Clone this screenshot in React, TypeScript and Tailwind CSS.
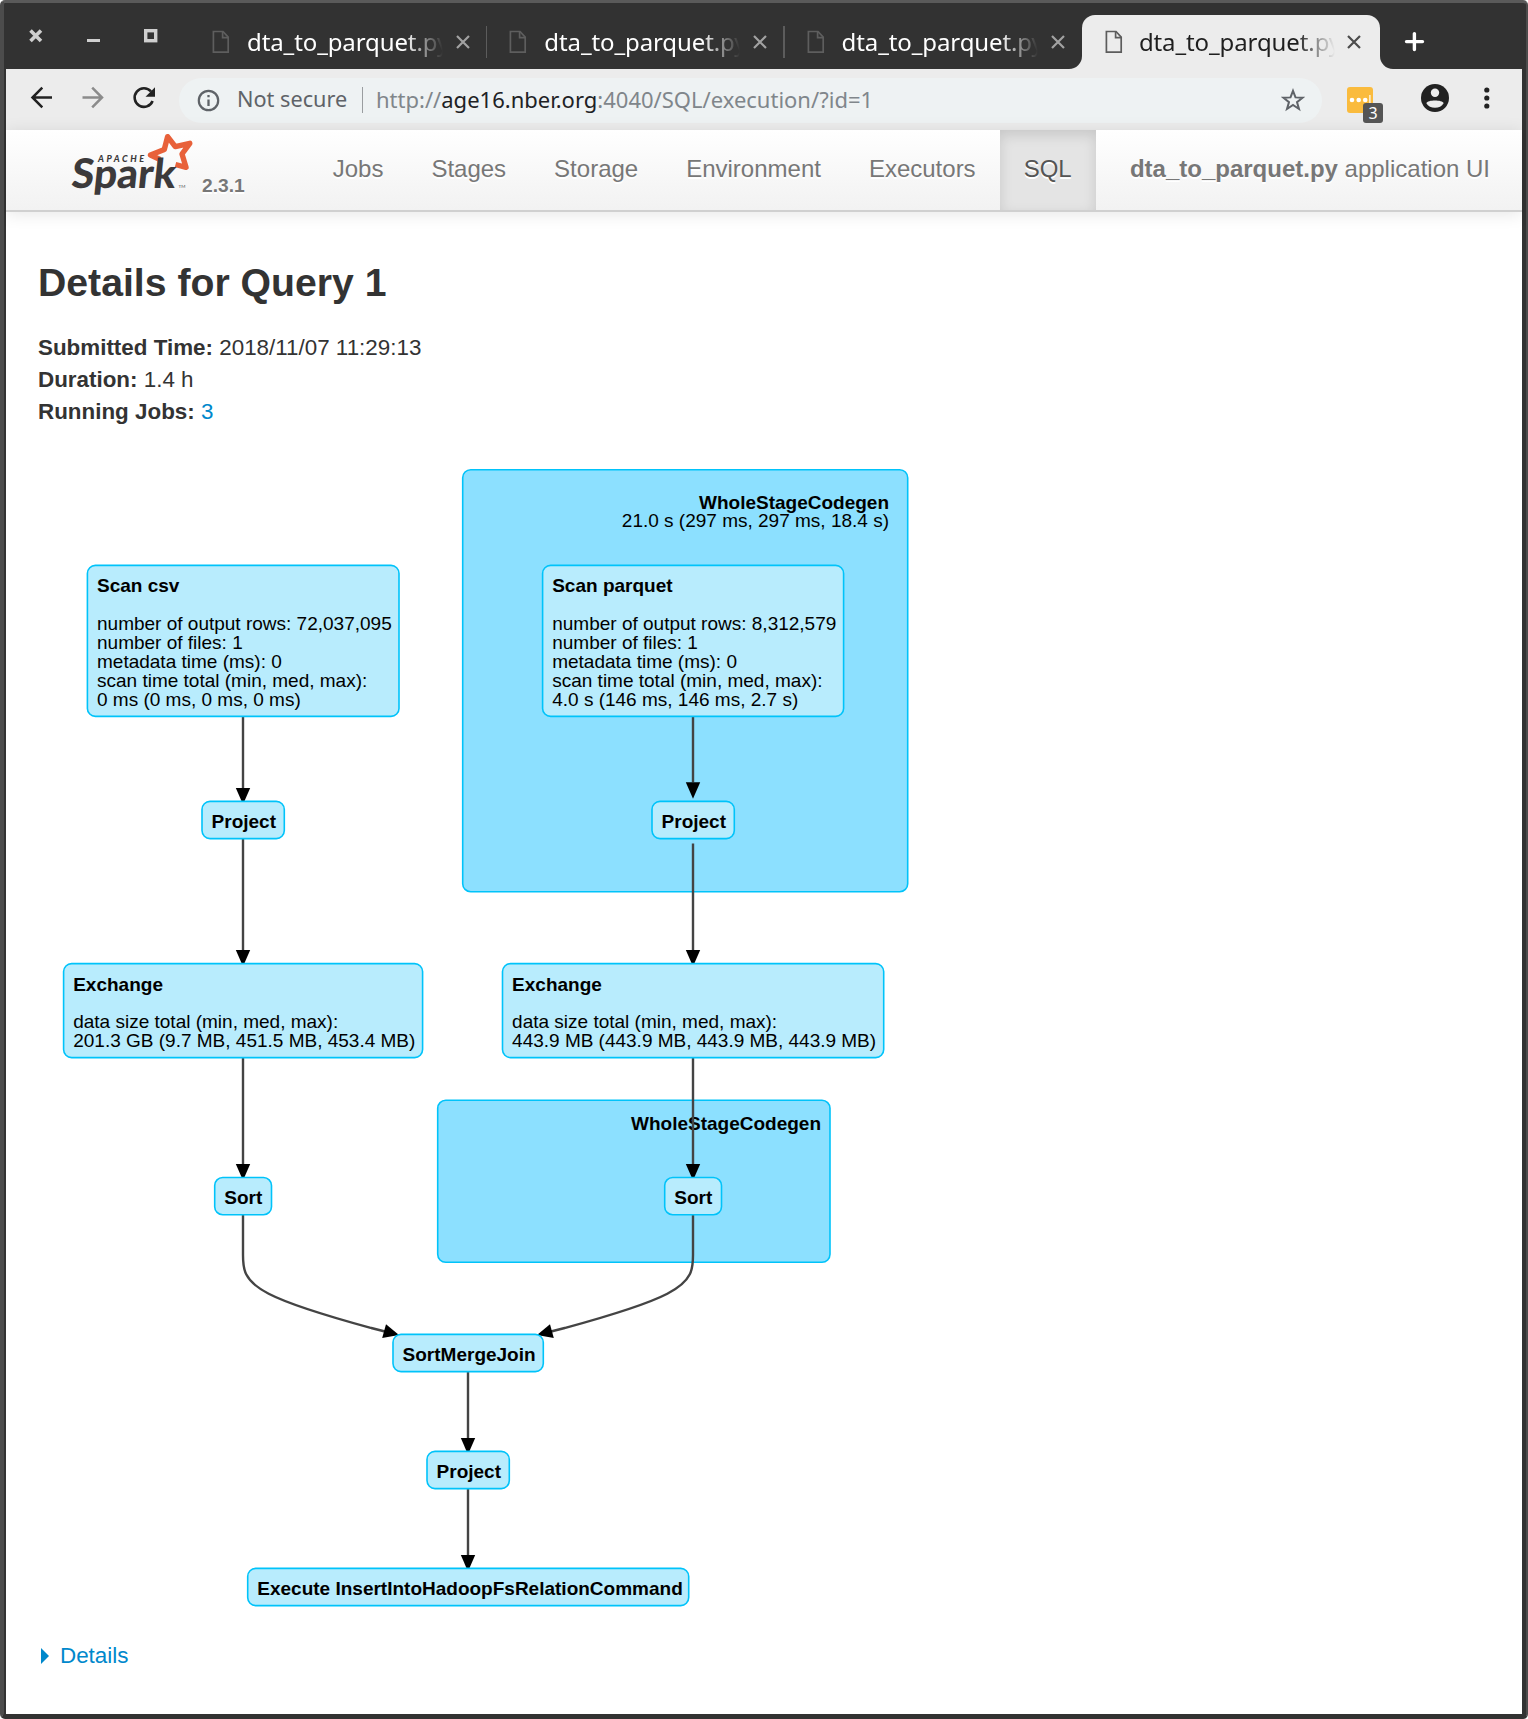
import React from "react";

const chromeFont = 'font-["Noto_Sans",sans-serif]';

function FileIcon({ color }: { color: string }) {
  return (
    <svg width="18" height="24" viewBox="0 0 18 24" fill="none" stroke={color} strokeWidth="1.7" className="shrink-0">
      <path d="M1.4 1.5H11L16.2 7.2V22.2H1.4Z" />
      <path d="M10.6 1.5V7.6H16.2" />
    </svg>
  );
}

function CloseIcon({ color }: { color: string }) {
  return (
    <svg width="14" height="14" viewBox="0 0 14 14" stroke={color} strokeWidth="2.2" className="shrink-0">
      <path d="M1 1L13 13M13 1L1 13" />
    </svg>
  );
}

function Tab({ active = false, separator = false }: { active?: boolean; separator?: boolean }) {
  return (
    <div
      className={
        active
          ? "relative mt-[10.500px] flex h-[54.500px] w-[298px] shrink-0 items-start rounded-t-[13px] bg-[#ececec] pl-[23px]"
          : "relative mt-[10.500px] flex h-[54.500px] w-[297.3px] shrink-0 items-start pl-[22px]"
      }
    >
      <div className="mt-[15.500px]">
        <FileIcon color={active ? "#5c5c5c" : "#5e5e5e"} />
      </div>
      <div
        className={
          active
            ? "ml-[16px] mt-[10.500px] w-[196px] text-[#1f1f1f]"
            : "ml-[17px] mt-[10.500px] w-[196px] text-white"
        }
      >
        <span
          className={
            "block w-max whitespace-nowrap text-[24px] leading-[34px] tracking-[-0.1px] [mask-image:linear-gradient(to_right,black_158px,transparent_196px)] " +
            chromeFont
          }
        >
          dta_to_parquet.py
        </span>
      </div>
      <div className={active ? "ml-[12px] mt-[20px]" : "ml-[13px] mt-[20px]"}>
        <CloseIcon color={active ? "#4c4c4c" : "#a2a2a2"} />
      </div>
      {separator && <div className="absolute right-0 top-[11.500px] h-[32px] w-[1.500px] bg-[#5c5c5c]" />}
      {active && (
        <>
          <svg className="absolute bottom-0 left-[-13px]" width="13" height="13">
            <path d="M13 0V13H0A13 13 0 0 0 13 0Z" fill="#ececec" />
          </svg>
          <svg className="absolute bottom-0 right-[-13px]" width="13" height="13">
            <path d="M0 0V13H13A13 13 0 0 1 0 0Z" fill="#ececec" />
          </svg>
        </>
      )}
    </div>
  );
}

function TabStrip() {
  return (
    <div className="flex h-[65px] bg-[#323232]">
      <svg width="184" height="65" viewBox="6 4 184 65" fill="none" stroke="#cfcfcf" className="shrink-0">
        <path d="M30.500 30.500L41 41M41 30.500L30.500 41" strokeWidth="3.6" />
        <path d="M87 40.600H100" strokeWidth="3" />
        <rect x="145.700" y="30.700" width="10" height="10" strokeWidth="3.4" />
      </svg>
      <Tab separator />
      <Tab separator />
      <Tab />
      <Tab active />
      <svg width="60" height="65" viewBox="1380 4 60 65" stroke="white" strokeWidth="3.4" strokeLinecap="round">
        <path d="M1406.500 41.600H1422.500M1414.400 33.600V49.600" />
      </svg>
    </div>
  );
}

function Toolbar() {
  return (
    <div className="flex h-[61px] items-center bg-[#ececec]">
      <svg width="173" height="61" viewBox="6 69 173 61" fill="none" className="shrink-0">
        <path d="M52 97.500H33M42.300 87.700L32.500 97.500L42.300 107.300" stroke="#222" strokeWidth="2.5" />
        <path d="M82.500 97.500H101.500M92.200 87.700L102 97.500L92.200 107.300" stroke="#8b8b8b" strokeWidth="2.5" />
        <path d="M152.600 101A9.300 9.300 0 1 1 151 91.500" stroke="#222" strokeWidth="2.6" />
        <path d="M155 87.300V96.800H145.500Z" fill="#222" />
      </svg>
      <div className="mt-[1px] flex h-[45px] w-[1143px] shrink-0 items-center rounded-full bg-[#eef2f3] pl-[18px]">
        <svg width="23" height="23" viewBox="0 0 23 23" fill="none" stroke="#5f6368" className="shrink-0">
          <circle cx="11.500" cy="11.500" r="9.700" strokeWidth="2.2" />
          <path d="M11.500 10.400V17M11.500 6V8.300" strokeWidth="2.3" />
        </svg>
        <span className={"-mt-[2px] ml-[17px] w-[125px] whitespace-nowrap text-[21.700px] leading-[30px] text-[#5f6368] " + chromeFont}>
          Not secure
        </span>
        <span className="mr-[13px] h-[26px] w-[1px] shrink-0 bg-[#9a9da0]" />
        <span className={"-mt-[2px] w-[880px] whitespace-nowrap text-[22px] leading-[30px] text-[#80868b] " + chromeFont}>
          http://<span className="text-[#202124]">age16.nber.org</span>:4040/SQL/execution/?id=1
        </span>
        <svg width="24" height="24" viewBox="0 0 24 24" fill="none" stroke="#5f6368" strokeWidth="2" className="ml-[25px] shrink-0">
          <path d="M12 2.800L14.500 9.400L21.600 9.700L16 14.100L18 21L12 17L6 21L8 14.100L2.400 9.700L9.500 9.400Z" />
        </svg>
      </div>
      <div className="relative ml-[25px] flex h-[26px] w-[26px] shrink-0 items-center rounded-[3px] bg-[#fabb3d]">
        <svg width="26" height="26" viewBox="0 0 26 26" fill="white">
          <circle cx="5" cy="13" r="2.3" />
          <circle cx="11.700" cy="13" r="2.3" />
          <circle cx="18.200" cy="13" r="2.3" />
          <rect x="22.300" y="8" width="1.200" height="10" />
        </svg>
        <div
          className={
            "absolute left-[16px] top-[16px] flex h-[20px] w-[20px] items-center justify-center rounded-[3px] bg-[#555] text-[16px] leading-none text-white " +
            chromeFont
          }
        >
          3
        </div>
      </div>
      <svg width="149" height="61" viewBox="1373 69 149 61" fill="#222" className="shrink-0">
        <circle cx="1435" cy="98" r="14" />
        <circle cx="1435" cy="92.800" r="4.2" fill="#ececec" />
        <path d="M1426.400 103.200C1427.500 99.700 1442.500 99.700 1443.600 103.200C1440.500 109.300 1429.500 109.300 1426.400 103.200Z" fill="#ececec" />
        <circle cx="1486.800" cy="90" r="2.6" />
        <circle cx="1486.800" cy="98" r="2.6" />
        <circle cx="1486.800" cy="106" r="2.6" />
      </svg>
    </div>
  );
}

function SparkLogo() {
  return (
    <svg width="130" height="70" viewBox="66 130 130 70" className="shrink-0 [text-shadow:none]">
      <path
        d="M160 159.500L150.500 155L164.300 149.500L167.600 136.700L175.300 146.600L189.800 143.300L182 154L186 167.300L175.500 164.500"
        fill="none"
        stroke="#e8613a"
        strokeWidth="5.4"
        strokeLinejoin="round"
      />
      <text
        x="0"
        y="0"
        transform="translate(70.5 188) skewX(-6)"
        textLength="104"
        lengthAdjust="spacingAndGlyphs"
        fontFamily="Lato, sans-serif"
        fontWeight="900"
        fontSize="41"
        fill="#3c3a3b"
      >
        Spark
      </text>
      <text x="98" y="162" textLength="46" fontFamily="Lato, sans-serif" fontStyle="italic" fontWeight="900" fontSize="9" fill="#3c3a3b">
        APACHE
      </text>
      <text x="178.500" y="188" fontFamily="Lato, sans-serif" fontSize="4.5" fill="#555">
        TM
      </text>
    </svg>
  );
}

const navLinks = ["Jobs", "Stages", "Storage", "Environment", "Executors"];

function NavBar() {
  return (
    <nav className="flex h-[82px] border-b-2 border-[#d0d0d0] bg-linear-to-b from-white to-[#f2f2f2] text-[24px] leading-[77px] text-[#777] shadow-[0_2px_16px_rgba(0,0,0,0.1)] [text-shadow:0_1.6px_0_#fff]">
      <div className="flex w-[302.700px] shrink-0 pl-[60px]">
        <SparkLogo />
        <span className="ml-[6px] mt-[17px] text-[19.200px] font-bold">2.3.1</span>
      </div>
      {navLinks.map((label) => (
        <a key={label} className="px-[24px]">
          {label}
        </a>
      ))}
      <a className="bg-[#e4e4e4] px-[24px] text-[#555] shadow-[inset_0_5px_13px_rgba(0,0,0,0.125)]">SQL</a>
      <span className="ml-auto mr-[32px] whitespace-nowrap">
        <b>dta_to_parquet.py</b> application UI
      </span>
    </nav>
  );
}

type Box = { x: number; y: number; w: number; h: number };
type PlanNode = Box & { title: string; titleY: number; lines?: { text: string; y: number }[] };

const clusters: Box[] = [
  { x: 462.7, y: 469.7, w: 445, h: 422 },
  { x: 437.7, y: 1100.3, w: 392.3, h: 162 },
];

const nodes: PlanNode[] = [
  {
    x: 87.4, y: 565.4, w: 311.6, h: 151, title: "Scan csv", titleY: 592,
    lines: [
      { text: "number of output rows: 72,037,095", y: 630 },
      { text: "number of files: 1", y: 649 },
      { text: "metadata time (ms): 0", y: 668 },
      { text: "scan time total (min, med, max):", y: 687 },
      { text: "0 ms (0 ms, 0 ms, 0 ms)", y: 706 },
    ],
  },
  {
    x: 542.6, y: 565.4, w: 301, h: 151, title: "Scan parquet", titleY: 592,
    lines: [
      { text: "number of output rows: 8,312,579", y: 630 },
      { text: "number of files: 1", y: 649 },
      { text: "metadata time (ms): 0", y: 668 },
      { text: "scan time total (min, med, max):", y: 687 },
      { text: "4.0 s (146 ms, 146 ms, 2.7 s)", y: 706 },
    ],
  },
  { x: 202, y: 801.4, w: 82.3, h: 37.2, title: "Project", titleY: 828 },
  { x: 652, y: 801.4, w: 82.3, h: 37.2, title: "Project", titleY: 828 },
  {
    x: 63.6, y: 963.6, w: 359, h: 94, title: "Exchange", titleY: 991,
    lines: [
      { text: "data size total (min, med, max):", y: 1028 },
      { text: "201.3 GB (9.7 MB, 451.5 MB, 453.4 MB)", y: 1047 },
    ],
  },
  {
    x: 502.5, y: 963.6, w: 381.2, h: 94, title: "Exchange", titleY: 991,
    lines: [
      { text: "data size total (min, med, max):", y: 1028 },
      { text: "443.9 MB (443.9 MB, 443.9 MB, 443.9 MB)", y: 1047 },
    ],
  },
  { x: 214.7, y: 1177.5, w: 56.8, h: 37.2, title: "Sort", titleY: 1204 },
  { x: 664.7, y: 1177.5, w: 56.8, h: 37.2, title: "Sort", titleY: 1204 },
  { x: 393, y: 1334.4, w: 150.3, h: 37.2, title: "SortMergeJoin", titleY: 1361 },
  { x: 427, y: 1451.4, w: 82.3, h: 37.2, title: "Project", titleY: 1478 },
  { x: 247.7, y: 1568.4, w: 441, h: 37.2, title: "Execute InsertIntoHadoopFsRelationCommand", titleY: 1595 },
];

// Straight edges: centre x, start y and the y of the arrow head's base.
const straightEdges = [
  { x: 243, from: 716, head: 788 },
  { x: 243, from: 838, head: 950 },
  { x: 243, from: 1057, head: 1164 },
  { x: 693, from: 716, head: 782.3 },
  { x: 693, from: 843.5, head: 950 },
  { x: 693, from: 1057, head: 1164 },
  { x: 468, from: 1371, head: 1438 },
  { x: 468, from: 1488, head: 1555 },
];

function PlanGraph() {
  return (
    <svg
      width="1516"
      height="1160"
      viewBox="6 460 1516 1160"
      className="block shrink-0"
      fontFamily='"Liberation Sans", Arial, sans-serif'
      fontSize="19"
      fill="#000"
    >
      {clusters.map((c) => (
        <rect key={c.y} x={c.x} y={c.y} width={c.w} height={c.h} rx="8" fill="#8ce0ff" stroke="#00c3fa" strokeWidth="1.6" />
      ))}
      <text x="889" y="509" textAnchor="end" fontWeight="bold">WholeStageCodegen</text>
      <text x="889" y="527" textAnchor="end">21.0 s (297 ms, 297 ms, 18.4 s)</text>
      <text x="821" y="1130" textAnchor="end" fontWeight="bold">WholeStageCodegen</text>
      {straightEdges.map((e) => (
        <g key={`${e.x}-${e.from}`}>
          <path d={`M${e.x} ${e.from}V${e.head}`} stroke="#444" strokeWidth="2.4" />
          <path d={`M${e.x - 7.2} ${e.head}h14.4l-7.2 16.5z`} />
        </g>
      ))}
      <g fill="none" stroke="#444" strokeWidth="2.4">
        <path d="M243 1214V1255C243 1268 243 1280.500 268.700 1293.700C294.300 1307 345.700 1321 371.300 1328L385 1331.500" />
        <path d="M693 1214V1255C693 1268 693 1280.500 667.300 1293.700C641.700 1307 590.300 1321 564.700 1328L551 1331.500" />
      </g>
      <path d="M386 1324.200L382.200 1338L399 1335Z" />
      <path d="M550 1324.200L553.800 1338L537 1335Z" />
      {nodes.map((n) => (
        <g key={`${n.x}-${n.y}`}>
          <rect x={n.x} y={n.y} width={n.w} height={n.h} rx="8" fill="#b8ecfd" stroke="#00c3fa" strokeWidth="1.6" />
          <text x={n.x + 9.6} y={n.titleY} fontWeight="bold">{n.title}</text>
          {n.lines?.map((l) => (
            <text key={l.y} x={n.x + 9.6} y={l.y} textLength={l.text.startsWith("443.9") ? 364 : undefined}>{l.text}</text>
          ))}
        </g>
      ))}
    </svg>
  );
}

export default function App() {
  return (
    <div className="h-[1719px] w-[1528px] overflow-hidden bg-white">
      <div className='flex h-[1719px] flex-col overflow-hidden rounded-[5px] border-b-[5px] border-l-[4px] border-r-[2px] border-t-[3px] border-b-[#323232] border-l-[#4c4c4c] border-r-[#4c4c4c] border-t-[#5a5a5a] bg-[#323232] pl-[2px] pr-[4px] pt-[1px] font-["Liberation_Sans",Arial,sans-serif] text-[#333]'>
        <TabStrip />
        <Toolbar />
        <main className="flex flex-1 flex-col bg-white">
          <NavBar />
          <div className="h-[248px] pl-[32px] pt-[39px]">
            <h3 className="text-[39.200px] font-bold leading-[64px]">Details for Query 1</h3>
            <ul className="mt-[17px] text-[22.400px] leading-[32px]">
              <li><b>Submitted Time:</b> 2018/11/07 11:29:13</li>
              <li><b>Duration:</b> 1.4 h</li>
              <li><b>Running Jobs:</b> <a className="text-[#08c]">3</a></li>
            </ul>
          </div>
          <PlanGraph />
          <div className="mt-[20px] flex items-center pl-[35px] text-[22.400px] leading-[32px] text-[#08c]">
            <svg width="8" height="16" viewBox="0 0 8 16" className="-mt-[1px] mr-[11px]" fill="#08c">
              <path d="M0 0L8 8L0 16Z" />
            </svg>
            Details
          </div>
        </main>
      </div>
    </div>
  );
}
